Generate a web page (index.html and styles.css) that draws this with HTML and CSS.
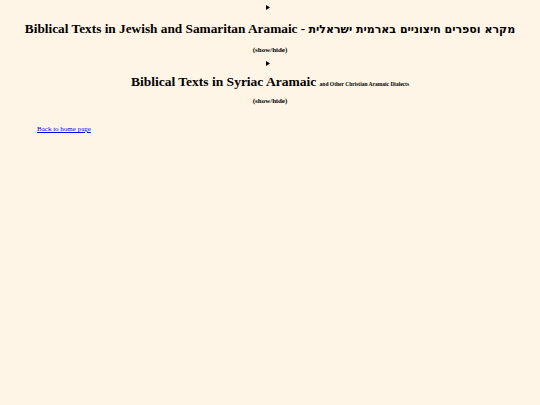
FILE: index.html
```html
<!DOCTYPE html>
<html>
<head>
<meta charset="utf-8">
<title>Aramaic Texts</title>
<link rel="stylesheet" href="styles.css">
</head>
<body>
<div class="section">
  <div class="marker"><svg class="tri" width="4" height="5" viewBox="0 0 4 5"><polygon points="0,0 4,2.5 0,5" fill="#000"/></svg></div>
  <h2 class="title">Biblical Texts in Jewish and Samaritan Aramaic - <span class="he" lang="he">מקרא וספרים חיצוניים בארמית ישראלית</span></h2>
  <div class="toggle">(show/hide)</div>
</div>
<div class="section second">
  <div class="marker"><svg class="tri" width="4" height="5" viewBox="0 0 4 5"><polygon points="0,0 4,2.5 0,5" fill="#000"/></svg></div>
  <h2 class="title title2">Biblical Texts in Syriac Aramaic <span class="sub">and Other Christian Aramaic Dialects</span></h2>
  <div class="toggle toggle2">(show/hide)</div>
</div>
<p class="back"><a href="#">Back to home page</a></p>
</body>
</html>
```
FILE: styles.css
```css
html, body {
  margin: 0;
  padding: 0;
  background: #fff5e6;
}
body {
  font-family: "Liberation Serif", "DejaVu Serif", serif;
  color: #000;
}
.section {
  text-align: center;
}
.marker {
  height: 14px;
  display: flex;
  align-items: center;
  justify-content: center;
}
.tri {
  display: block;
  margin-right: 4px;
}
.title {
  margin: 5px 0 0;
  font-size: 13.3px;
  line-height: 20px;
  font-weight: bold;
  white-space: nowrap;
}
.he {
  font-family: "DejaVu Sans", sans-serif;
  font-size: 11px;
}
.title2 {
  margin-top: 4px;
  font-size: 13.5px;
}
.sub {
  font-size: 5.5px;
}
.toggle {
  margin-top: 5px;
  font-size: 7px;
  line-height: 10px;
  font-weight: bold;
}
.toggle2 {
  margin-top: 2px;
}
.second {
  margin-top: 3px;
}
.second .marker {
  height: 10px;
}
.back {
  margin: 18px 0 0 37px;
  font-size: 7px;
  line-height: 10px;
}
.back a {
  color: #0000ee;
}
```
